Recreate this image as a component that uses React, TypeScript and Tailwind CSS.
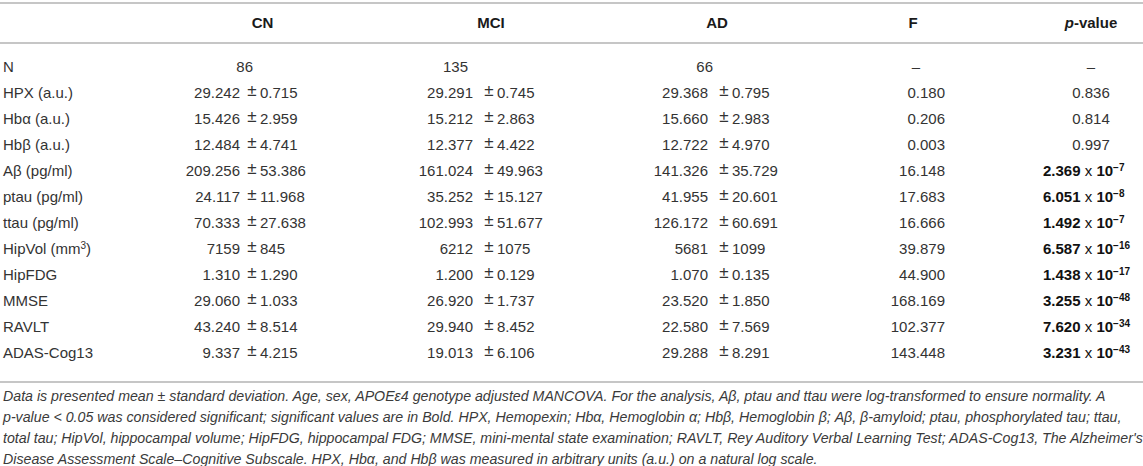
import React from "react";

type Row = {
  label: React.ReactNode;
  vals?: [string, string][];
  n?: string[];
  f: string;
  p: React.ReactNode;
  sig?: boolean;
};

// p-value in bold with scientific exponent
const Sci = ({ m, e }: { m: string; e: string }) => (
  <span className="font-bold text-[#111]">
    {m} <span className="font-normal">x</span> 10
    <sup className="text-[10px]">−{e}</sup>
  </span>
);

const rows: Row[] = [
  { label: "N", n: ["86", "135", "66"], f: "–", p: "–" },
  {
    label: "HPX (a.u.)",
    vals: [["29.242", "0.715"], ["29.291", "0.745"], ["29.368", "0.795"]],
    f: "0.180",
    p: "0.836",
  },
  {
    label: "Hbα (a.u.)",
    vals: [["15.426", "2.959"], ["15.212", "2.863"], ["15.660", "2.983"]],
    f: "0.206",
    p: "0.814",
  },
  {
    label: "Hbβ (a.u.)",
    vals: [["12.484", "4.741"], ["12.377", "4.422"], ["12.722", "4.970"]],
    f: "0.003",
    p: "0.997",
  },
  {
    label: "Aβ (pg/ml)",
    vals: [["209.256", "53.386"], ["161.024", "49.963"], ["141.326", "35.729"]],
    f: "16.148",
    p: <Sci m="2.369" e="7" />,
    sig: true,
  },
  {
    label: "ptau (pg/ml)",
    vals: [["24.117", "11.968"], ["35.252", "15.127"], ["41.955", "20.601"]],
    f: "17.683",
    p: <Sci m="6.051" e="8" />,
    sig: true,
  },
  {
    label: "ttau (pg/ml)",
    vals: [["70.333", "27.638"], ["102.993", "51.677"], ["126.172", "60.691"]],
    f: "16.666",
    p: <Sci m="1.492" e="7" />,
    sig: true,
  },
  {
    label: (
      <>
        HipVol (mm<sup className="text-[10px]">3</sup>)
      </>
    ),
    vals: [["7159", "845"], ["6212", "1075"], ["5681", "1099"]],
    f: "39.879",
    p: <Sci m="6.587" e="16" />,
    sig: true,
  },
  {
    label: "HipFDG",
    vals: [["1.310", "1.290"], ["1.200", "0.129"], ["1.070", "0.135"]],
    f: "44.900",
    p: <Sci m="1.438" e="17" />,
    sig: true,
  },
  {
    label: "MMSE",
    vals: [["29.060", "1.033"], ["26.920", "1.737"], ["23.520", "1.850"]],
    f: "168.169",
    p: <Sci m="3.255" e="48" />,
    sig: true,
  },
  {
    label: "RAVLT",
    vals: [["43.240", "8.514"], ["29.940", "8.452"], ["22.580", "7.569"]],
    f: "102.377",
    p: <Sci m="7.620" e="34" />,
    sig: true,
  },
  {
    label: "ADAS-Cog13",
    vals: [["9.337", "4.215"], ["19.013", "6.106"], ["29.288", "8.291"]],
    f: "143.448",
    p: <Sci m="3.231" e="43" />,
    sig: true,
  },
];

// per group column: mean box width, gap before ±, N box width
const groups = [
  { mean: "w-[90px]", gap: "ml-[5px]", n: "w-[103px]" },
  { mean: "w-[98px]", gap: "ml-[9px]", n: "w-[93px]" },
  { mean: "w-[101px]", gap: "ml-[9px]", n: "w-[106px]" },
];

const grid = "grid grid-cols-[150px_225px_232px_220px_172px_1fr]";

const notes = [
  "Data is presented mean ± standard deviation. Age, sex, APOEε4 genotype adjusted MANCOVA. For the analysis, Aβ, ptau and ttau were log-transformed to ensure normality. A",
  "p-value < 0.05 was considered significant; significant values are in Bold. HPX, Hemopexin; Hbα, Hemoglobin α; Hbβ, Hemoglobin β; Aβ, β-amyloid; ptau, phosphorylated tau; ttau,",
  "total tau; HipVol, hippocampal volume; HipFDG, hippocampal FDG; MMSE, mini-mental state examination; RAVLT, Rey Auditory Verbal Learning Test; ADAS-Cog13, The Alzheimer's",
  "Disease Assessment Scale–Cognitive Subscale. HPX, Hbα, and Hbβ was measured in arbitrary units (a.u.) on a natural log scale.",
];

export default function App() {
  return (
    <div
      className="w-[1143px] h-[466px] bg-white text-[15px] text-[#333] overflow-hidden"
      style={{ fontFamily: '"Liberation Sans", Arial, sans-serif' }}
    >
      <div className="pt-[2px]">
        <div className="h-[2px] bg-[#c6c6c6]" />
        <div className={`${grid} h-[38px] items-center font-bold text-[#1a1a1a]`}>
          <div />
          <div className="text-center">CN</div>
          <div className="text-center">MCI</div>
          <div className="text-center">AD</div>
          <div className="text-center">F</div>
          <div className="text-center pl-[40px]">
            <i>p</i>-value
          </div>
        </div>
        <div className="h-[2px] bg-[#c6c6c6]" />

        <div className="pt-[10px] pb-[15px]">
          {rows.map((row, i) => (
            <div key={i} className={`${grid} h-[26px] items-center`}>
              <div className="pl-[3px] whitespace-nowrap">{row.label}</div>
              {groups.map((g, j) => (
                <div key={j} className="flex whitespace-nowrap">
                  {row.n ? (
                    <span className={`${g.n} text-right`}>{row.n[j]}</span>
                  ) : (
                    <>
                      <span className={`${g.mean} text-right`}>{row.vals![j][0]}</span>
                      <span className={`${g.gap} inline-block w-[14px] text-[17px] leading-none text-center`}>
                        ±
                      </span>
                      <span className="ml-[1px]">{row.vals![j][1]}</span>
                    </>
                  )}
                </div>
              ))}
              <div className={row.n ? "text-center pl-[6px]" : "text-right pr-[54px]"}>{row.f}</div>
              <div
                className={
                  row.sig ? "pl-[44px] whitespace-nowrap" : "text-center pl-[40px] whitespace-nowrap"
                }
              >
                {row.p}
              </div>
            </div>
          ))}
        </div>
        <div className="h-[2px] bg-[#c6c6c6]" />

        <div className="pt-[3px] pl-[3px] text-[14.2px] leading-[21px] italic text-[#3a3a3a]">
          {notes.map((line, i) => (
            <div key={i} className="whitespace-nowrap">
              {line}
            </div>
          ))}
        </div>
      </div>
    </div>
  );
}
